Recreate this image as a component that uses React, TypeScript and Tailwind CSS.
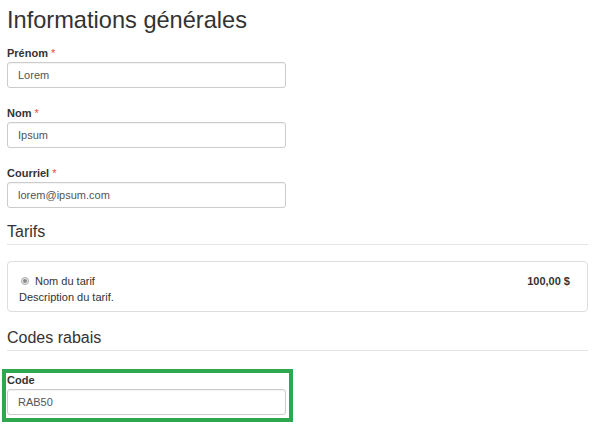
import React from 'react';

const font = { fontFamily: '"Liberation Sans", Arial, sans-serif' };

const Field = ({ label, value, required = true }: { label: string; value: string; required?: boolean }) => (
  <div className="flex flex-col">
    <label className="text-[11px] leading-[15px] font-bold text-[#333]">
      {label}
      {required && <span className="text-[#e74c3c] font-normal"> *</span>}
    </label>
    <div className="mt-[1px] h-[26px] w-[279px] rounded-[3px] border border-[#ccc] pl-[10px] flex items-center text-[11px] text-[#555] shadow-[inset_0_1px_1px_rgba(0,0,0,0.05)]">
      {value}
    </div>
  </div>
);

const SectionTitle = ({ children }: { children: React.ReactNode }) => (
  <div className="border-b border-[#e5e5e5] pb-[2px]">
    <h4 className="text-[16px] leading-[20px] text-[#333]">{children}</h4>
  </div>
);

export default function App() {
  return (
    <div className="w-[607px] h-[424px] bg-white px-[7px] pt-[6px]" style={font}>
      <h3 className="text-[23.6px] leading-[28px] text-[#333]">Informations générales</h3>

      <div className="mt-[12px] flex flex-col gap-[18px]">
        <Field label="Prénom" value="Lorem" />
        <Field label="Nom" value="Ipsum" />
        <Field label="Courriel" value="lorem@ipsum.com" />
      </div>

      <div className="mt-[14px] w-[581px]">
        <SectionTitle>Tarifs</SectionTitle>

        {/* tarif card */}
        <div className="mt-[16px] h-[51px] rounded-[4px] border border-[#ddd] flex justify-between pl-[11px] pr-[17px] pt-[11px]">
          <div className="text-[11px] leading-[16px] text-[#333]">
            <div className="flex items-center gap-[6px] pl-[2px]">
              <span className="w-[8px] h-[8px] rounded-full border border-[#aaa] bg-[#eee] flex items-center justify-center">
                <span className="w-[4px] h-[4px] rounded-full bg-[#888]" />
              </span>
              <span>Nom du tarif</span>
            </div>
            <div>Description du tarif.</div>
          </div>
          <div className="text-[11px] leading-[16px] font-bold text-[#333]">100,00 $</div>
        </div>

        <div className="mt-[16px]">
          <SectionTitle>Codes rabais</SectionTitle>
        </div>
      </div>

      <div className="mt-[18px] -ml-[5px] w-[291px] border-[4px] border-[#2ea84f] pl-[1px] pb-[3px]">
        <Field label="Code" value="RAB50" required={false} />
      </div>
    </div>
  );
}
